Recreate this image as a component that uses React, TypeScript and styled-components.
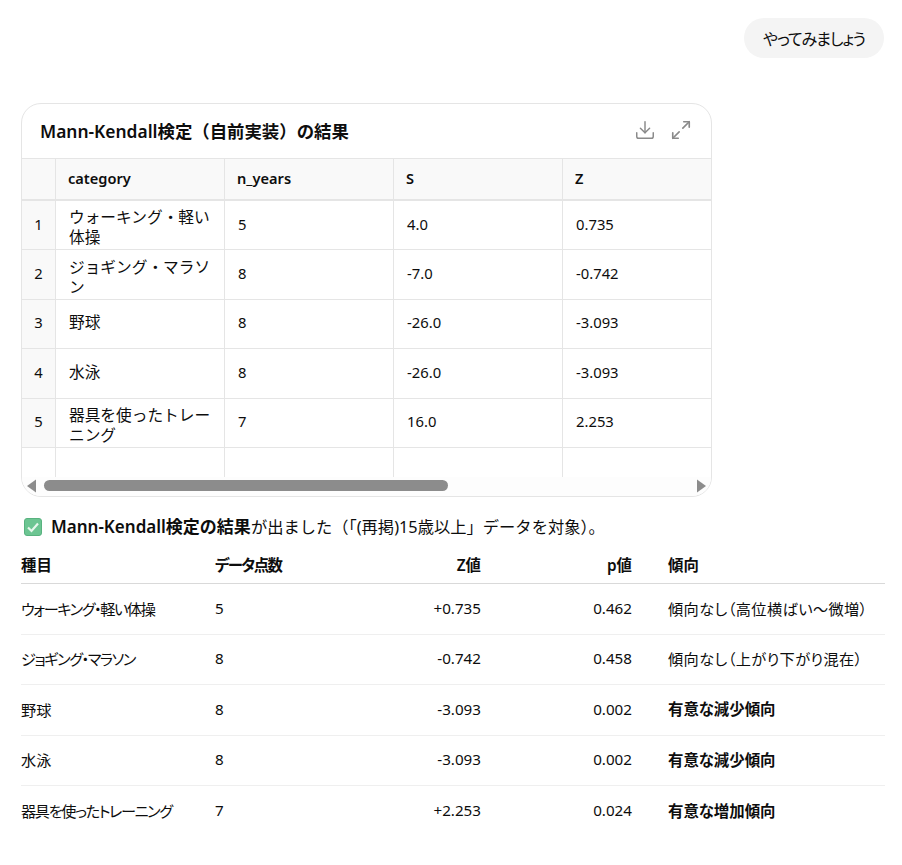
import React from 'react';
import styled, { createGlobalStyle } from 'styled-components';
import { Download, Maximize2 } from 'lucide-react';

const GlobalStyle = createGlobalStyle`
  html, body {
    margin: 0;
    padding: 0;
    background: #fff;
  }
  body {
    font-family: "Noto Sans", "Noto Sans CJK JP", sans-serif;
    font-size: 14.8px;
    color: #0d0d0d;
  }
`;

const Page = styled.div`
  width: 902px;
  height: 865px;
  overflow: hidden;
  padding: 18px 18px 0 21px;
  box-sizing: border-box;
`;

const UserRow = styled.div`
  display: flex;
  justify-content: flex-end;
  margin-bottom: 45px;
`;

const Bubble = styled.div`
  width: 140px;
  height: 40px;
  border-radius: 20px;
  background: #f4f4f4;
  display: flex;
  align-items: center;
  justify-content: center;
  font-size: 16px;
  letter-spacing: -1px;
  font-feature-settings: "palt";
`;

const Card = styled.div`
  width: 691px;
  height: 394px;
  box-sizing: border-box;
  border: 1px solid #e5e5e5;
  border-radius: 20px;
  overflow: hidden;
  position: relative;
`;

const CardHead = styled.div`
  height: 54px;
  display: flex;
  align-items: center;
  justify-content: space-between;
  padding: 0 19px 2px 18px;
  box-sizing: border-box;
  font-size: 17.4px;
  font-weight: 600;
`;

const CardTools = styled.div`
  display: flex;
  gap: 14px;
  color: #8a8a8a;
`;

const Grid = styled.div`
  display: grid;
  grid-template-columns: 34px 169px 169px 169px 150px;
  border-top: 1px solid #e5e5e5;
`;

const HeadCell = styled.div`
  height: 42px;
  box-sizing: border-box;
  background: #f9f9f9;
  border-bottom: 2px solid #e5e5e5;
  border-right: 1px solid #e5e5e5;
  padding: 0 0 2px 12px;
  display: flex;
  align-items: center;
  font-size: 14.6px;
  font-weight: 600;
  &:nth-child(5n) {
    border-right: 0;
  }
`;

const IndexCell = styled.div<{ $blank?: boolean }>`
  height: ${p => (p.$blank ? '30px' : '49.4px')};
  box-sizing: border-box;
  background: ${p => (p.$blank ? '#fff' : '#f9f9f9')};
  border-bottom: ${p => (p.$blank ? '0' : '1px solid #e5e5e5')};
  border-right: 1px solid #e5e5e5;
  padding-bottom: 3px;
  display: flex;
  align-items: center;
  justify-content: center;
`;

const Cell = styled.div<{ $blank?: boolean; $last?: boolean; $label?: boolean; $wrapped?: boolean }>`
  height: ${p => (p.$blank ? '30px' : '49.4px')};
  box-sizing: border-box;
  border-bottom: ${p => (p.$blank ? '0' : '1px solid #e5e5e5')};
  border-right: ${p => (p.$last ? '0' : '1px solid #e5e5e5')};
  padding: ${p => (p.$wrapped ? '4px 12px 0 13px' : '0 12px 3px 13px')};
  display: flex;
  align-items: center;
  line-height: 20px;
  font-size: ${p => (p.$label ? '15.7px' : '14.8px')};
`;

const ScrollTrack = styled.div`
  position: absolute;
  left: 0;
  right: 0;
  bottom: 0;
  height: 19px;
  background: #fdfdfd;
`;

const ScrollThumb = styled.div`
  position: absolute;
  left: 22px;
  top: 3px;
  width: 404px;
  height: 11px;
  border-radius: 6px;
  background: #8c8c8c;
`;

const Arrow = styled.svg<{ $right?: boolean }>`
  position: absolute;
  top: 2px;
  ${p => (p.$right ? 'right: 4px;' : 'left: 4px;')}
`;

const Summary = styled.p`
  margin: 18px 0 0 3px;
  height: 24px;
  display: flex;
  align-items: center;
  font-size: 17px;
  line-height: 24px;
  gap: 9px;
  white-space: nowrap;
  b {
    font-weight: 600;
  }
`;

const SummaryRest = styled.span`
  font-size: 16.3px;
`;

const CheckIcon = styled.svg`
  flex: none;
`;

const Table = styled.table`
  width: 864px;
  margin-top: 6px;
  border-collapse: collapse;
  table-layout: fixed;
`;

const Th = styled.th<{ $w: number; $right?: boolean; $tight?: boolean }>`
  width: ${p => p.$w}px;
  height: 38px;
  padding: 0;
  text-align: ${p => (p.$right ? 'right' : 'left')};
  font-weight: 600;
  font-size: 15.4px;
  letter-spacing: ${p => (p.$tight ? '-1.6px' : '0')};
  font-feature-settings: "palt";
  border-bottom: 1px solid #d9d9d9;
`;

const Td = styled.td<{ $right?: boolean; $bold?: boolean; $spacing?: number }>`
  height: 50.5px;
  padding: 0 0 2px;
  box-sizing: border-box;
  text-align: ${p => (p.$right ? 'right' : 'left')};
  font-weight: ${p => (p.$bold ? 600 : 400)};
  font-size: ${p => (p.$bold ? '15.4px' : '15.2px')};
  letter-spacing: ${p => p.$spacing ?? 0}px;
  font-feature-settings: "palt";
  border-bottom: 1px solid #efefef;
  white-space: nowrap;
`;

const LastRow = styled.tr`
  td {
    border-bottom: 0;
  }
`;

const SpacerTh = styled.th`
  width: 36px;
  padding: 0;
  border-bottom: 1px solid #d9d9d9;
`;

const gridRows = [
  ['ウォーキング・軽い体操', '5', '4.0', '0.735'],
  ['ジョギング・マラソン', '8', '-7.0', '-0.742'],
  ['野球', '8', '-26.0', '-3.093'],
  ['水泳', '8', '-26.0', '-3.093'],
  ['器具を使ったトレーニング', '7', '16.0', '2.253'],
];

const tableRows = [
  { name: 'ウォーキング・軽い体操', n: '5', z: '+0.735', p: '0.462', trend: '傾向なし（高位横ばい〜微増）', bold: false },
  { name: 'ジョギング・マラソン', n: '8', z: '-0.742', p: '0.458', trend: '傾向なし（上がり下がり混在）', bold: false },
  { name: '野球', n: '8', z: '-3.093', p: '0.002', trend: '有意な減少傾向', bold: true },
  { name: '水泳', n: '8', z: '-3.093', p: '0.002', trend: '有意な減少傾向', bold: true },
  { name: '器具を使ったトレーニング', n: '7', z: '+2.253', p: '0.024', trend: '有意な増加傾向', bold: true },
];

const ResultRow: React.FC<{ row: (typeof tableRows)[number]; last: boolean }> = ({ row, last }) => {
  const Row = last ? LastRow : 'tr';
  return (
    <Row>
      <Td $spacing={row.name.length > 2 ? -1.4 : 0}>{row.name}</Td>
      <Td>{row.n}</Td>
      <Td $right>{row.z}</Td>
      <Td $right>{row.p}</Td>
      <Td />
      <Td $bold={row.bold} $spacing={row.bold ? 0 : 0.4}>{row.trend}</Td>
    </Row>
  );
};

export default function App() {
  return (
    <Page>
      <GlobalStyle />
      <UserRow>
        <Bubble>やってみましょう</Bubble>
      </UserRow>
      <Card>
        <CardHead>
          <span>Mann-Kendall検定（自前実装）の結果</span>
          <CardTools>
            <Download size={22} strokeWidth={1.6} />
            <Maximize2 size={22} strokeWidth={1.8} />
          </CardTools>
        </CardHead>
        <Grid>
          <HeadCell />
          <HeadCell>category</HeadCell>
          <HeadCell>n_years</HeadCell>
          <HeadCell>S</HeadCell>
          <HeadCell>Z</HeadCell>
          {gridRows.map((row, i) => (
            <React.Fragment key={i}>
              <IndexCell>{i + 1}</IndexCell>
              {row.map((val, j) => (
                <Cell key={j} $last={j === 3} $label={j === 0} $wrapped={j === 0 && val.length > 9}>{val}</Cell>
              ))}
            </React.Fragment>
          ))}
          <IndexCell $blank />
          <Cell $blank />
          <Cell $blank />
          <Cell $blank />
          <Cell $blank $last />
        </Grid>
        <ScrollTrack>
          <Arrow width="11" height="14" viewBox="0 0 11 14">
            <path d="M10 0.5 L10 13.5 L1 7 Z" fill="#8c8c8c" />
          </Arrow>
          <ScrollThumb />
          <Arrow $right width="11" height="14" viewBox="0 0 11 14">
            <path d="M1 0.5 L1 13.5 L10 7 Z" fill="#8c8c8c" />
          </Arrow>
        </ScrollTrack>
      </Card>
      <Summary>
        <CheckIcon width="18" height="18" viewBox="0 0 18 18">
          <rect x="0.5" y="0.5" width="17" height="17" rx="2.5" fill="#6cc592" stroke="#58b27f" />
          <path d="M4 9.5 L7.5 13 L14 5.5" fill="none" stroke="#e6f7ec" strokeWidth="2.2" />
        </CheckIcon>
        <span><b>Mann-Kendall検定の結果</b><SummaryRest>が出ました（「(再掲)15歳以上」データを対象）。</SummaryRest></span>
      </Summary>
      <Table>
        <thead>
          <tr>
            <Th $w={194}>種目</Th>
            <Th $w={100} $tight>データ点数</Th>
            <Th $w={166} $right>Z値</Th>
            <Th $w={151} $right>p値</Th>
            <SpacerTh />
            <Th $w={217}>傾向</Th>
          </tr>
        </thead>
        <tbody>
          {tableRows.map((row, i) => (
            <ResultRow key={i} row={row} last={i === tableRows.length - 1} />
          ))}
        </tbody>
      </Table>
    </Page>
  );
}
